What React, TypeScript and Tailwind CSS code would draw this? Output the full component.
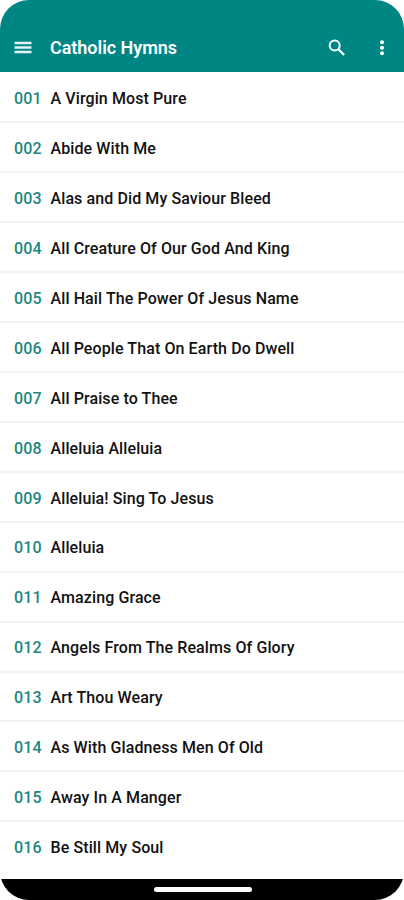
const hymns = [
  'A Virgin Most Pure',
  'Abide With Me',
  'Alas and Did My Saviour Bleed',
  'All Creature Of Our God And King',
  'All Hail The Power Of Jesus Name',
  'All People That On Earth Do Dwell',
  'All Praise to Thee',
  'Alleluia Alleluia',
  'Alleluia! Sing To Jesus',
  'Alleluia',
  'Amazing Grace',
  'Angels From The Realms Of Glory',
  'Art Thou Weary',
  'As With Gladness Men Of Old',
  'Away In A Manger',
  'Be Still My Soul',
]

function MenuIcon() {
  return (
    <svg viewBox="0 0 18 13" className="h-[13px] w-[18px]" fill="none" stroke="#e6f3f3" strokeWidth="2.5">
      <path d="M0.5 2h17M0.5 6.5h17M0.5 11h17" />
    </svg>
  )
}

function SearchIcon() {
  return (
    <svg viewBox="0 0 22 22" className="size-[22px]" fill="none" stroke="currentColor" strokeWidth="2">
      <circle cx="8.7" cy="8.6" r="5" />
      <path d="M12.4 12.3l5.7 5.7" strokeWidth="2.3" />
    </svg>
  )
}

function MoreIcon() {
  return (
    <svg viewBox="0 0 22 22" className="size-[22px]" fill="currentColor">
      <circle cx="11" cy="5.3" r="2" />
      <circle cx="11" cy="10.8" r="2" />
      <circle cx="11" cy="16.3" r="2" />
    </svg>
  )
}

function Header() {
  return (
    <header className="flex h-[72px] shrink-0 items-center bg-[#008585] pt-[23px] pr-[11px] pl-[14px] text-white">
      <button aria-label="Menu">
        <MenuIcon />
      </button>
      <h1 className="ml-[18px] flex-1 text-[18px] leading-6 font-semibold tracking-[-0.04px]">
        Catholic Hymns
      </h1>
      <button aria-label="Search">
        <SearchIcon />
      </button>
      <button aria-label="More options" className="ml-[23px]">
        <MoreIcon />
      </button>
    </header>
  )
}

export default function App() {
  return (
    <div className="h-[900px] w-[404px] bg-white font-[Roboto,sans-serif]">
      <div className="flex h-full flex-col overflow-hidden rounded-[29px] bg-white">
        <Header />
        <ul className="flex-1 overflow-hidden pt-[1.5px]">
          {hymns.map((title, i) => (
            <li
              key={title}
              className="flex h-[49.93px] items-center border-b-2 border-[#f2f2f2] pt-[3.4px] pl-[14px] text-[16px] font-medium tracking-[0.1px] last:border-transparent"
            >
              <span className="w-[36.5px] text-[#1b8782]">{String(i + 1).padStart(3, '0')}</span>
              <span className="text-[#111111]">{title}</span>
            </li>
          ))}
        </ul>
        <div className="flex h-[21px] shrink-0 justify-center bg-black pt-2">
          <div className="ml-px h-[4.5px] w-[98px] rounded-full bg-white" />
        </div>
      </div>
    </div>
  )
}
